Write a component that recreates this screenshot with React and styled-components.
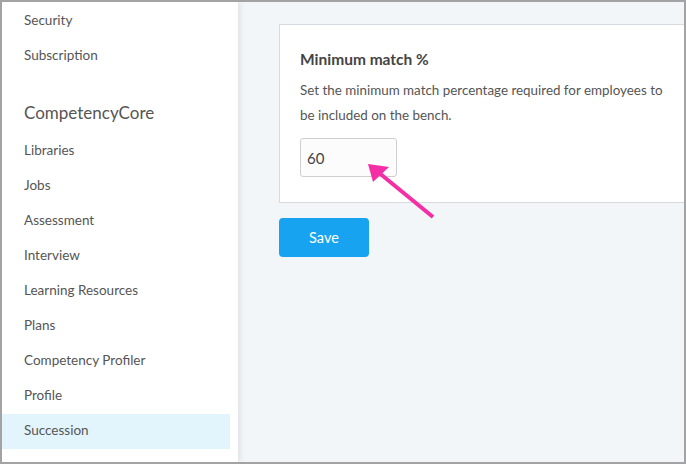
import React from 'react';
import styled, { createGlobalStyle } from 'styled-components';

const GlobalStyle = createGlobalStyle`
  html, body {
    margin: 0;
    padding: 0;
    background: #ffffff;
  }
  * {
    box-sizing: border-box;
  }
`;

const Frame = styled.div`
  position: relative;
  width: 686px;
  height: 464px;
  border: 2px solid #a3a3a3;
  display: flex;
  overflow: hidden;
  font-family: Lato, "Liberation Sans", sans-serif;
  color: #555;
`;

const Sidebar = styled.nav`
  position: relative;
  z-index: 1;
  width: 236px;
  flex-shrink: 0;
  background: #fff;
  padding-top: 2px;
  box-shadow: 2px 0 6px rgba(0, 0, 0, 0.09);
`;

const NavItem = styled.div`
  height: 35px;
  display: flex;
  align-items: center;
  padding: 0 0 4px 22px;
  margin-right: 8px;
  font-size: 13.5px;
  color: #555;
  background: ${p => (p.active ? '#e2f5fd' : 'transparent')};
`;

const NavHeading = styled.div`
  margin: 27px 0 9px;
  padding-left: 22px;
  font-size: 17px;
  line-height: 24px;
  color: #555;
`;

const Main = styled.main`
  flex: 1;
  background: #f3f6f9;
  padding: 22px 0 0 41px;
  min-width: 0;
`;

const Card = styled.section`
  background: #fff;
  border: 1px solid #d6dbdf;
  margin-right: -20px;
  padding: 24px 20px 25px;
`;

const Title = styled.h3`
  margin: 0;
  font-size: 15.5px;
  line-height: 20px;
  font-weight: 700;
  color: #444;
`;

const Help = styled.p`
  margin: 9px 0 0;
  font-size: 13.4px;
  line-height: 25px;
  color: #555;
  max-width: 370px;
`;

const NumberInput = styled.input`
  display: block;
  margin-top: 10px;
  width: 97px;
  height: 39px;
  padding: 0 6px;
  border: 1px solid #cfcfcf;
  border-radius: 3px;
  background: #fcfcfc;
  font-family: inherit;
  font-size: 15px;
  color: #444;
  outline: none;
`;

const SaveButton = styled.button`
  margin-top: 15px;
  width: 90px;
  height: 39px;
  border: none;
  border-radius: 4px;
  background: #17a3ef;
  color: #fff;
  font-family: inherit;
  font-size: 14.5px;
  cursor: pointer;
`;

const Callout = styled.svg`
  position: absolute;
  left: 362px;
  top: 158px;
  pointer-events: none;
`;

const navTop = ['Security', 'Subscription'];
const navCore = [
  'Libraries',
  'Jobs',
  'Assessment',
  'Interview',
  'Learning Resources',
  'Plans',
  'Competency Profiler',
  'Profile',
  'Succession',
];

export default function App() {
  return (
    <>
      <GlobalStyle />
      <Frame>
        <Sidebar>
          {navTop.map(item => (
            <NavItem key={item}>{item}</NavItem>
          ))}
          <NavHeading>CompetencyCore</NavHeading>
          {navCore.map(item => (
            <NavItem key={item} active={item === 'Succession'}>
              {item}
            </NavItem>
          ))}
        </Sidebar>
        <Main>
          <Card>
            <Title>Minimum match %</Title>
            <Help>
              Set the minimum match percentage required for employees to be included on the bench.
            </Help>
            <NumberInput type="text" defaultValue="60" />
          </Card>
          <SaveButton>Save</SaveButton>
        </Main>
        {/* pink annotation arrow pointing at the input */}
        <Callout width="80" height="70" viewBox="0 0 80 70">
          <line x1="69" y1="57" x2="14" y2="12" stroke="#f42fa6" strokeWidth="4" strokeLinecap="butt" />
          <polygon points="4,4 25,7 9,22" fill="#f42fa6" />
        </Callout>
      </Frame>
    </>
  );
}
